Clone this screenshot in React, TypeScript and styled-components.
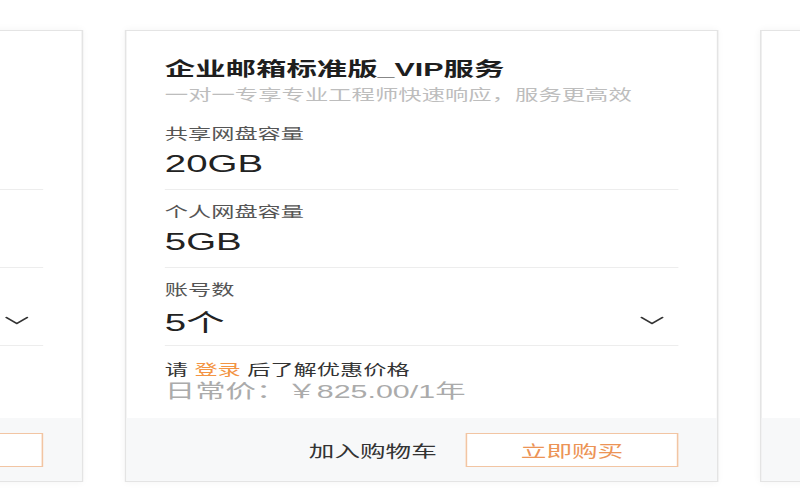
import React from 'react';
import styled, { createGlobalStyle } from 'styled-components';

// the reference is a narrow capture stretched wide, so the stage is laid out
// at 500px and scaled horizontally to fill the 800px window
const SCALE_X = 1.6;

type Field = { label: string; value: string; select?: boolean };
type Plan = { title: string; desc: string; fields: Field[]; price: string };

const plans: Plan[] = [
	{
		title: '企业邮箱标准版_基础服务',
		desc: '标准邮箱服务，满足日常办公需要',
		fields: [
			{ label: '共享网盘容量', value: '10GB' },
			{ label: '个人网盘容量', value: '2GB' },
			{ label: '账号数', value: '5个', select: true },
		],
		price: '日常价：￥600.00/1年',
	},
	{
		title: '企业邮箱标准版_VIP服务',
		desc: '一对一专享专业工程师快速响应，服务更高效',
		fields: [
			{ label: '共享网盘容量', value: '20GB' },
			{ label: '个人网盘容量', value: '5GB' },
			{ label: '账号数', value: '5个', select: true },
		],
		price: '日常价：￥825.00/1年',
	},
	{
		title: '企业邮箱集团版',
		desc: '多组织统一管理，安全稳定',
		fields: [
			{ label: '共享网盘容量', value: '50GB' },
			{ label: '个人网盘容量', value: '10GB' },
			{ label: '账号数', value: '20个', select: true },
		],
		price: '日常价：￥2400.00/1年',
	},
];

const GlobalStyle = createGlobalStyle`
	html, body {
		margin: 0;
		padding: 0;
		width: 800px;
		height: 500px;
		overflow: hidden;
		background: #ffffff;
	}
	body {
		font-family: 'Liberation Sans', 'Noto Sans CJK SC', sans-serif;
		color: #222;
	}
`;

const Stage = styled.div<{ $scale: number }>`
	width: 500px;
	padding-top: 30px;
	transform: scaleX(${(p) => p.$scale});
	transform-origin: 0 0;
`;

const Row = styled.div`
	display: flex;
	gap: 26px;
	margin-left: -319px;
`;

const Card = styled.div`
	flex: 0 0 371px;
	box-sizing: border-box;
	height: 452px;
	display: flex;
	flex-direction: column;
	background: #fff;
	border: 1px solid #e4e4e4;
	box-shadow: 0 0 6px rgba(0, 0, 0, 0.05);
`;

const Body = styled.div`
	padding: 27px 24px 0;
`;

const Title = styled.div`
	font-size: 19px;
	line-height: 24px;
	font-weight: 700;
	color: #1e1e1e;
	white-space: nowrap;
`;

const Desc = styled.div`
	margin-top: 3px;
	font-size: 14.6px;
	line-height: 20px;
	color: #bdbdbd;
	white-space: nowrap;
`;

const Fields = styled.div`
	margin-top: 7px;
`;

const Section = styled.div`
	padding: 12px 0 10px;
	border-bottom: 1px solid #ededed;
`;

const Label = styled.div`
	font-size: 14.5px;
	line-height: 20px;
	color: #555;
`;

const Value = styled.div`
	margin-top: 5px;
	height: 30px;
	display: flex;
	align-items: center;
	justify-content: space-between;
	font-size: 24px;
	color: #222;
`;

const Chevron = styled.svg`
	width: 15px;
	height: 9px;
	margin-right: 9px;
`;

const Hint = styled.div`
	padding-top: 14px;
	font-size: 14.5px;
	line-height: 20px;
	color: #333;
	white-space: nowrap;
`;

const LoginLink = styled.span`
	margin: 0 4px;
	color: #f39443;
`;

const Price = styled.div`
	font-size: 19px;
	line-height: 24px;
	color: #ababab;
	white-space: nowrap;
`;

const Footer = styled.div`
	margin-top: auto;
	height: 63px;
	display: flex;
	align-items: center;
	justify-content: flex-end;
	gap: 18px;
	padding-right: 24px;
	background: #f7f8f9;
`;

const CartLink = styled.span`
	font-size: 16px;
	color: #333;
	white-space: nowrap;
`;

const BuyButton = styled.button`
	width: 133px;
	height: 34px;
	padding: 0;
	background: #fff;
	border: 1px solid #f2c5a3;
	color: #ec9456;
	font-family: inherit;
	font-size: 16px;
	cursor: pointer;
`;

const PlanCard = ({ plan }: { plan: Plan }) => (
	<Card>
		<Body>
			<Title>{plan.title}</Title>
			<Desc>{plan.desc}</Desc>
			<Fields>
				{plan.fields.map((f) => (
					<Section key={f.label}>
						<Label>{f.label}</Label>
						<Value>
							<span>{f.value}</span>
							{f.select && (
								<Chevron viewBox="0 0 15 9" fill="none">
									<polyline
										points="1,1.5 7.5,7.5 14,1.5"
										stroke="#333"
										strokeWidth="1.4"
										strokeLinecap="round"
										strokeLinejoin="round"
									/>
								</Chevron>
							)}
						</Value>
					</Section>
				))}
			</Fields>
			<Hint>
				请<LoginLink>登录</LoginLink>后了解优惠价格
			</Hint>
			<Price>{plan.price}</Price>
		</Body>
		<Footer>
			<CartLink>加入购物车</CartLink>
			<BuyButton>立即购买</BuyButton>
		</Footer>
	</Card>
);

const App = () => (
	<>
		<GlobalStyle />
		<Stage $scale={SCALE_X}>
			<Row>
				{plans.map((p) => (
					<PlanCard key={p.title} plan={p} />
				))}
			</Row>
		</Stage>
	</>
);

export default App;
